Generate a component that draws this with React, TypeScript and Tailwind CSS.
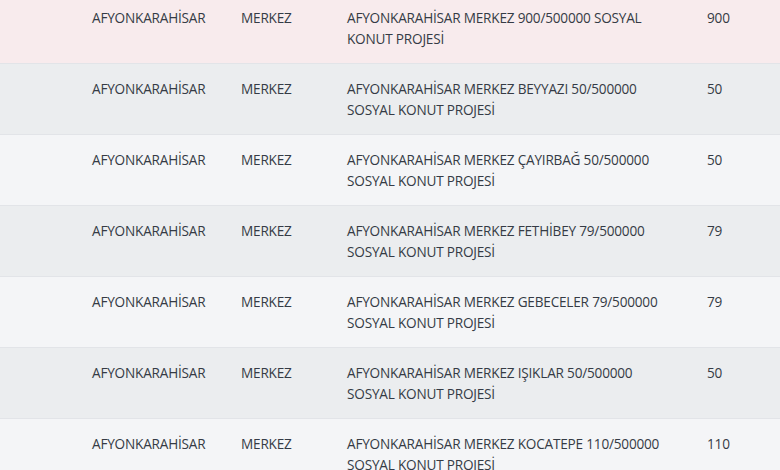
import React from "react";

const rows = [
  { l1: "AFYONKARAHİSAR MERKEZ 900/500000 SOSYAL", l2: "KONUT PROJESİ", n: "900", bg: "bg-[#f8ebed]" },
  { l1: "AFYONKARAHİSAR MERKEZ BEYYAZI 50/500000", l2: "SOSYAL KONUT PROJESİ", n: "50", bg: "bg-[#ebedef]" },
  { l1: "AFYONKARAHİSAR MERKEZ ÇAYIRBAĞ 50/500000", l2: "SOSYAL KONUT PROJESİ", n: "50", bg: "bg-[#f4f5f7]" },
  { l1: "AFYONKARAHİSAR MERKEZ FETHİBEY 79/500000", l2: "SOSYAL KONUT PROJESİ", n: "79", bg: "bg-[#ebedef]" },
  { l1: "AFYONKARAHİSAR MERKEZ GEBECELER 79/500000", l2: "SOSYAL KONUT PROJESİ", n: "79", bg: "bg-[#f4f5f7]" },
  { l1: "AFYONKARAHİSAR MERKEZ IŞIKLAR 50/500000", l2: "SOSYAL KONUT PROJESİ", n: "50", bg: "bg-[#ebedef]" },
  { l1: "AFYONKARAHİSAR MERKEZ KOCATEPE 110/500000", l2: "SOSYAL KONUT PROJESİ", n: "110", bg: "bg-[#f4f5f7]" },
];

export default function App() {
  return (
    <div className="w-[780px] h-[470px] overflow-hidden bg-[#f4f5f7] text-[#353b45] text-[13.6px] tracking-[-0.2px] leading-[21px] font-['Open_Sans',sans-serif]">
      <div className="-mt-[7px] flex flex-col">
        {rows.map((r, i) => (
          <div
            key={i}
            className={`grid grid-cols-[77px_149px_106px_360px_1fr] border-b border-[#e2e4e8] ${r.bg}`}
          >
            <div className="px-[15px] pt-[14px] pb-[14px]"></div>
            <div className="px-[15px] pt-[14px] pb-[14px] whitespace-nowrap">AFYONKARAHİSAR</div>
            <div className="px-[15px] pt-[14px] pb-[14px] whitespace-nowrap">MERKEZ</div>
            <div className="px-[15px] pt-[14px] pb-[14px] whitespace-nowrap">
              <div>{r.l1}</div>
              <div>{r.l2}</div>
            </div>
            <div className="px-[15px] pt-[14px] pb-[14px]">{r.n}</div>
          </div>
        ))}
      </div>
    </div>
  );
}
